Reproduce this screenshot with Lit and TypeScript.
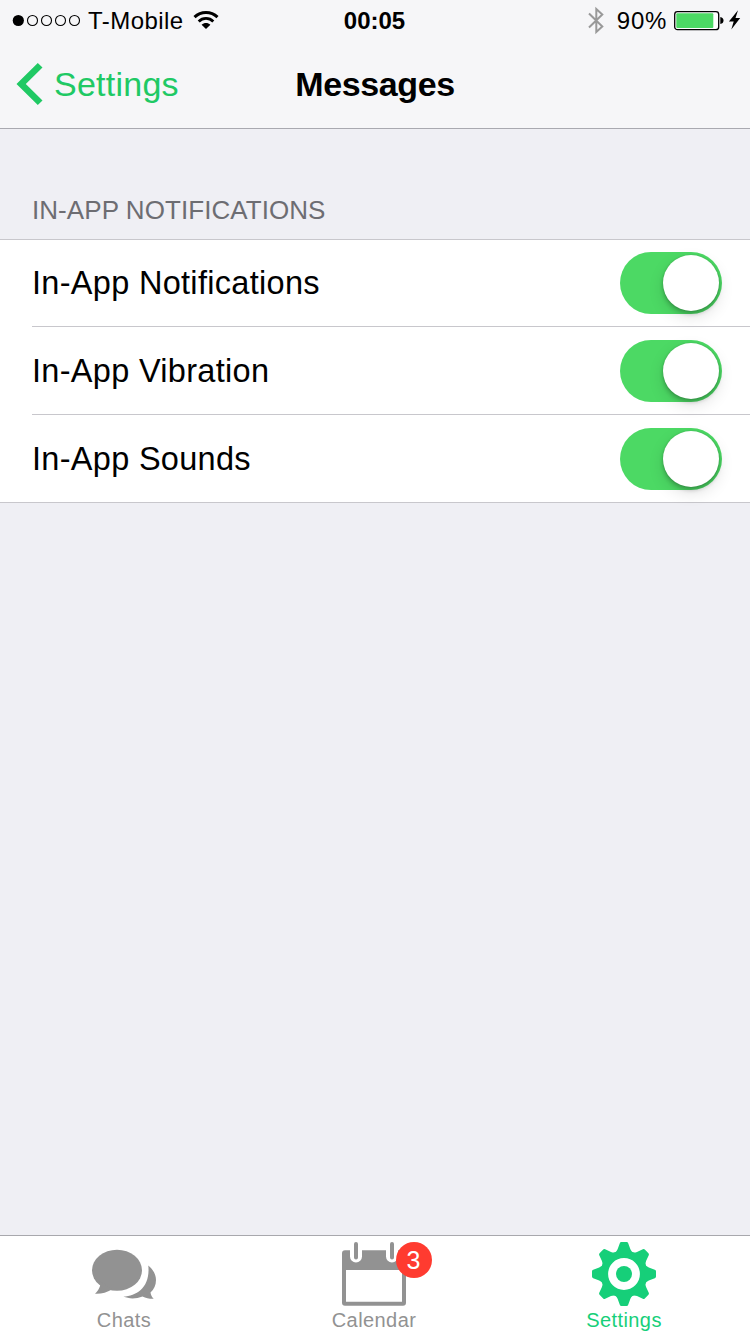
import { LitElement, html, css, svg } from "lit";
import { customElement, property } from "lit/decorators.js";

const chatsIcon = svg`
  <ellipse cx="25" cy="28.300" rx="25" ry="20.500"/>
  <path d="M8 39C9.400 43.500 6.500 48.500 3 51.700C9.500 52 14.500 50.500 20 47.500Z"/>
  <path d="M56.300 23.500C61 27.500 64 32.500 64 38C64 43 62 47.500 58.500 50.500C58.800 53 60 55.200 61.700 56.800C58 57 54 56.200 50.500 54.500C44 57 37 57 31.500 54.600C45 54 58.500 45 56.300 23.500Z"/>`;

const calendarIcon = svg`
  <path fill-rule="evenodd" d="M3 8.300H61Q64 8.300 64 11.300V60.700Q64 63.700 61 63.700H3Q0 63.700 0 60.700V11.300Q0 8.300 3 8.300ZM4 28V59.700H60V28Z"/>
  <path class="gap" d="M14 6V14.500M50 6V14.500"/>
  <path class="ring" d="M14 2V15.500M50 2V15.500"/>`;

const teeth = [0, 45, 90, 135, 180, 225, 270, 315];
const gearIcon = svg`
  <circle cx="32" cy="32" r="19.700" fill="none" stroke="currentColor" stroke-width="7.600"/>
  <circle cx="32" cy="32" r="8"/>
  ${teeth.map((a) => svg`<path transform="rotate(${a} 32 32)" d="M22 11.500Q25 9 25.600 7.200L27.800 1.200Q28.200 0 29.400 0H34.600Q35.800 0 36.200 1.200L38.400 7.200Q39 9 42 11.500Z"/>`)}`;

@customElement("status-bar")
class StatusBar extends LitElement {
  static styles = css`
    :host { display: grid; grid-template-columns: 1fr auto 1fr; align-items: start; height: 41px; line-height: 41px; font-size: 24px; }
    .side { display: flex; align-items: center; height: 41px; }
    .left { padding-left: 12px; }
    .right { justify-content: flex-end; padding-right: 9px; }
    .time { font-weight: 700; line-height: 42px; padding-right: 1px; }
    .carrier { letter-spacing: 0.450px; margin: 0 9px 0 7px; }
    .percent { letter-spacing: 0.700px; margin: 0 7px 0 11px; }
    svg { display: block; flex: none; }
  `;
  render() {
    return html`
      <div class="side left">
        <svg width="69" height="41">
          <circle cx="6.300" cy="20.500" r="5.600"/>
          ${[20.5, 34.5, 48.5, 62.5].map((x) => svg`<circle cx=${x} cy="20.500" r="5" fill="none" stroke="#000" stroke-width="1.100"/>`)}
        </svg>
        <span class="carrier">T-Mobile</span>
        <svg width="26" height="41" fill="none" stroke="#000" stroke-width="3">
          <path d="M1.500 17.200C8 11 18 11 24.500 17.200"/>
          <path d="M5.700 21.500C9.800 17.400 16.200 17.400 20.300 21.500" stroke-width="2.800"/>
          <path d="M13 29L8.600 24.800C11.200 22.300 14.800 22.300 17.400 24.800Z" fill="#000" stroke="none"/>
        </svg>
      </div>
      <div class="time">00:05</div>
      <div class="side right">
        <svg width="18" height="41" fill="none" stroke="#999" stroke-width="2">
          <path d="M1 13.500L14.300 26.500L8.300 32V9L14.300 14.500L1 27.500"/>
        </svg>
        <span class="percent">90%</span>
        <svg width="67" height="41">
          <rect x="0.700" y="11.700" width="44" height="18" rx="2.800" fill="#fff" stroke="#000" stroke-width="1.300"/>
          <rect x="2.300" y="13.300" width="37" height="14.800" rx="1" fill="#4cd964"/>
          <path d="M46.300 17Q49.500 17.500 49.500 20.500T46.300 24Z"/>
          <path d="M64 10.200L54.900 21.500H59.700L57.300 29.500L66.200 18H61.500Z"/>
        </svg>
      </div>`;
  }
}

@customElement("toggle-row")
class ToggleRow extends LitElement {
  @property() label = "";
  static styles = css`
    :host { display: flex; justify-content: space-between; box-sizing: border-box; height: 88px; margin-left: 32px; padding: 13px 28px 0 0; border-bottom: 1px solid #c8c7cc; }
    .label { font-size: 32.500px; line-height: 63px; letter-spacing: 0.300px; }
    .switch { box-sizing: border-box; display: flex; justify-content: flex-end; width: 102px; height: 62px; padding: 3px; border-radius: 31px; background: #4cd964; }
    .knob { width: 56px; height: 56px; border-radius: 50%; background: #fff; box-shadow: 0 3px 4px rgba(0, 0, 0, 0.220), 0 6px 16px rgba(0, 0, 0, 0.120), 0 0 2px rgba(0, 0, 0, 0.150); }
  `;
  render() {
    return html`<span class="label">${this.label}</span>
      <div class="switch" role="switch" aria-checked="true" aria-label=${this.label}><div class="knob"></div></div>`;
  }
}

@customElement("app-root")
class AppRoot extends LitElement {
  static styles = css`
    :host { display: flex; flex-direction: column; width: 750px; height: 1334px; overflow: hidden; background: #efeff4; color: #000; font-family: "Liberation Sans", Arial, sans-serif; }
    .top { box-sizing: border-box; height: 129px; background: #f6f6f8; border-bottom: 1px solid #a9a9b0; }
    .nav { display: grid; grid-template-columns: 1fr auto 1fr; height: 87px; line-height: 87px; font-size: 34px; }
    .back { display: flex; align-items: center; color: #20c964; letter-spacing: 0.250px; }
    .back svg { margin: 0 11px 2px 16px; }
    .title { font-weight: 700; letter-spacing: -0.400px; }
    main { flex: 1; }
    .heading { box-sizing: border-box; height: 110px; padding: 66px 32px 0; font-size: 26px; line-height: 30px; font-weight: 400; letter-spacing: 0.060px; margin: 0; color: #6d6d72; }
    .list { background: #fff; box-shadow: inset 0 1px #c8c7cc; border-bottom: 1px solid #c8c7cc; }
    .list toggle-row:last-child { height: 87px; border-bottom: 0; }
    .tabs { box-sizing: border-box; display: grid; grid-template-columns: 248px 252px 248px; height: 99px; padding-top: 6px; background: #fff; border-top: 1px solid #a8a8ad; color: #929292; }
    .tab { display: flex; flex-direction: column; align-items: center; gap: 2px; font-size: 20px; line-height: 24px; letter-spacing: 0.420px; }
    .active { color: #16cf79; }
    .icon { position: relative; width: 64px; height: 64px; }
    .icon svg { display: block; fill: currentColor; }
    .gap { stroke: #fff; stroke-width: 12px; stroke-linecap: round; }
    .ring { stroke: currentColor; stroke-width: 4px; stroke-linecap: round; }
    .badge { position: absolute; left: 54px; top: 0; width: 36px; height: 36px; border-radius: 50%; background: #ff3b30; color: #fff; font-size: 25px; line-height: 36px; text-align: center; letter-spacing: 0; text-indent: -1px; }
  `;
  render() {
    return html`
      <header class="top">
        <status-bar></status-bar>
        <div class="nav">
          <div class="back">
            <svg width="27" height="42" fill="#20c964"><path d="M0.500 21L21.800 0L26.500 4.500L9.800 21L26.500 37.500L21.800 42Z"/></svg>
            <span>Settings</span>
          </div>
          <div class="title">Messages</div>
        </div>
      </header>
      <main>
        <h2 class="heading">IN-APP NOTIFICATIONS</h2>
        <div class="list">
          <toggle-row label="In-App Notifications"></toggle-row>
          <toggle-row label="In-App Vibration"></toggle-row>
          <toggle-row label="In-App Sounds"></toggle-row>
        </div>
      </main>
      <nav class="tabs">
        <div class="tab"><div class="icon"><svg width="64" height="64">${chatsIcon}</svg></div><span>Chats</span></div>
        <div class="tab"><div class="icon"><svg width="64" height="64">${calendarIcon}</svg><div class="badge">3</div></div><span>Calendar</span></div>
        <div class="tab active"><div class="icon"><svg width="64" height="64">${gearIcon}</svg></div><span>Settings</span></div>
      </nav>`;
  }
}
